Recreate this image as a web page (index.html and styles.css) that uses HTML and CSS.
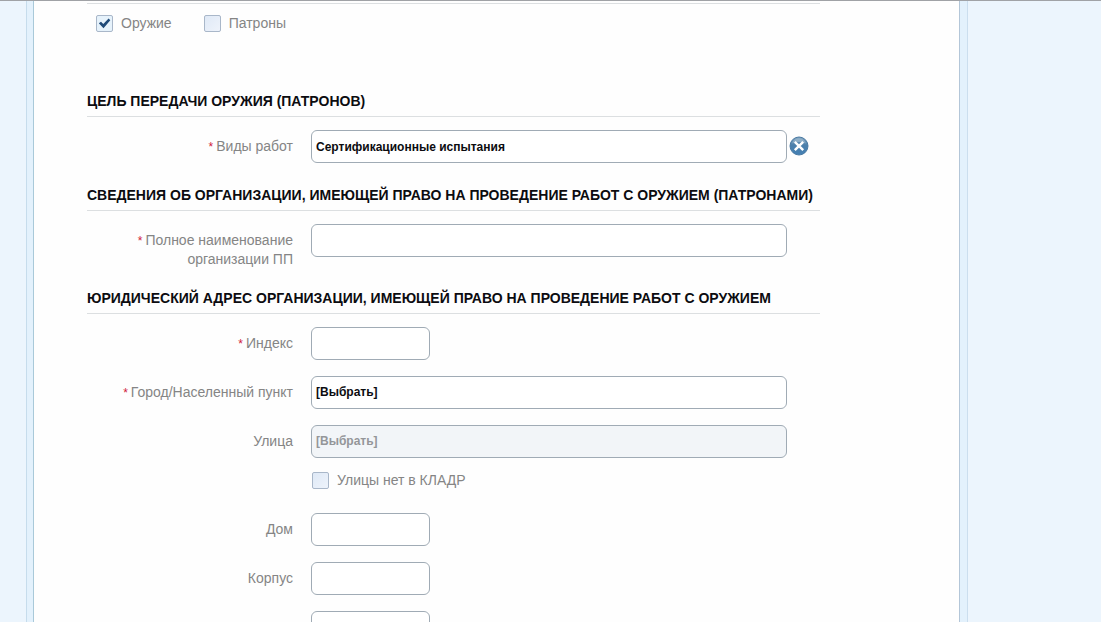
FILE: index.html
```
<!DOCTYPE html>
<html lang="ru">
<head>
<meta charset="utf-8">
<title>Передача оружия (патронов)</title>
<link rel="stylesheet" href="styles.css">
</head>
<body>
<div class="page">
  <div class="side side-left"></div>
  <div class="edge edge-left"></div>
  <main class="sheet">
    <form class="form">
      <div class="choices">
        <label class="check"><input type="checkbox" class="box" checked><span>Оружие</span></label>
        <label class="check"><input type="checkbox" class="box"><span>Патроны</span></label>
      </div>

      <section class="section section-first">
        <h2 class="title">ЦЕЛЬ ПЕРЕДАЧИ ОРУЖИЯ (ПАТРОНОВ)</h2>
        <div class="row">
          <label class="label" for="works"><span class="req">*</span>Виды работ</label>
          <input class="field" id="works" type="text" value="Сертификационные испытания">
          <button class="clear" type="button" aria-label="Очистить">
            <svg viewBox="0 0 20 20" width="20" height="20">
              <defs>
                <linearGradient id="ball" x1="0" y1="0" x2="0" y2="1">
                  <stop offset="0" stop-color="#7fa3bf"/>
                  <stop offset="0.45" stop-color="#4d80ab"/>
                  <stop offset="1" stop-color="#4380b4"/>
                </linearGradient>
              </defs>
              <circle cx="10" cy="10" r="9" fill="url(#ball)" stroke="#4a7aa3" stroke-width="1"/>
              <path d="M3 7.5C4.500 3.700 7 2.300 10 2.300S15.500 3.700 17 7.500C13 5.600 7 5.600 3 7.500Z" fill="#a9c1d3" opacity="0.6"/>
              <path d="M5.800 5.800L14.200 14.200M14.200 5.800L5.800 14.200" stroke="#fff" stroke-width="2.400"/>
            </svg>
          </button>
        </div>
      </section>

      <section class="section">
        <h2 class="title">СВЕДЕНИЯ ОБ ОРГАНИЗАЦИИ, ИМЕЮЩЕЙ ПРАВО НА ПРОВЕДЕНИЕ РАБОТ С ОРУЖИЕМ (ПАТРОНАМИ)</h2>
        <div class="row">
          <label class="label" for="org"><span class="req">*</span>Полное наименование<br>организации ПП</label>
          <input class="field" id="org" type="text">
        </div>
      </section>

      <section class="section">
        <h2 class="title">ЮРИДИЧЕСКИЙ АДРЕС ОРГАНИЗАЦИИ, ИМЕЮЩЕЙ ПРАВО НА ПРОВЕДЕНИЕ РАБОТ С ОРУЖИЕМ</h2>
        <div class="row">
          <label class="label" for="zip"><span class="req">*</span>Индекс</label>
          <input class="field field-short" id="zip" type="text">
        </div>
        <div class="row">
          <label class="label" for="city"><span class="req">*</span>Город/Населенный пункт</label>
          <select class="field" id="city"><option>[Выбрать]</option></select>
        </div>
        <div class="row">
          <label class="label" for="street">Улица</label>
          <select class="field" id="street" disabled><option>[Выбрать]</option></select>
        </div>
        <div class="row row-check">
          <label class="check"><input type="checkbox" class="box"><span>Улицы нет в КЛАДР</span></label>
        </div>
        <div class="row">
          <label class="label" for="house">Дом</label>
          <input class="field field-short" id="house" type="text">
        </div>
        <div class="row">
          <label class="label" for="block">Корпус</label>
          <input class="field field-short" id="block" type="text">
        </div>
        <div class="row">
          <span class="label"></span>
          <input class="field field-short" type="text" aria-label="Строение">
        </div>
      </section>
    </form>
  </main>
  <div class="edge edge-right"></div>
  <div class="side side-right"></div>
</div>
</body>
</html>
```
FILE: styles.css
```
* {
  box-sizing: border-box;
}

body {
  margin: 0;
  font: 14px/19px "Liberation Sans", Arial, sans-serif;
  color: #858585;
  background: #fefefe;
}

.page {
  display: flex;
  height: 100vh;
  overflow: hidden;
  border-top: 1px solid #a0a2a6;
}

.side {
  background: #ecf5fd;
}

.side-left {
  flex: 0 0 26px;
}

.side-right {
  flex: 0 0 133px;
}

.edge {
  flex: 0 0 8px;
  background: #e3f1fc;
}

.edge-left {
  border-left: 1px solid #c6dcec;
  border-right: 1px solid #a9c9d9;
}

.edge-right {
  flex-basis: 9px;
  border-left: 1px solid #b3c6d8;
  border-right: 1px solid #cbdeee;
}

.sheet {
  flex: 1;
  min-width: 0;
  padding: 2px 53px 0;
}

.form {
  max-width: 733px;
}

.choices {
  display: flex;
  gap: 32px;
  padding: 10px 9px 0;
  border-top: 1px solid #dcdfe1;
}

.check {
  display: flex;
  align-items: center;
  gap: 8px;
}

.box {
  appearance: none;
  width: 17px;
  height: 17px;
  margin: 0;
  border: 1px solid #a9b7c9;
  border-radius: 2px;
  background: linear-gradient(135deg, #dfe9f6, #eef3fb);
}

.box:checked {
  background: url("data:image/svg+xml,%3Csvg xmlns='http://www.w3.org/2000/svg' viewBox='0 0 15 15'%3E%3Cpath d='M1.800 7.300L4 5.700L6.300 8L11.600 2.600L13.300 4.200L6.500 12.300Z' fill='%231f4a78'/%3E%3C/svg%3E") #e6f2fb;
}

.section {
  margin-top: 19px;
}

.section-first {
  margin-top: 58px;
}

.title {
  margin: 0 0 13px;
  padding-bottom: 5px;
  border-bottom: 1px solid #dcdfe1;
  font-size: 14px;
  line-height: 20px;
  color: #0c0c10;
  white-space: nowrap;
}

.row {
  display: flex;
  align-items: flex-start;
  min-height: 36px;
}

.row + .row {
  margin-top: 13px;
}

.row + .row-check {
  min-height: 29px;
  margin-top: 10px;
  padding-left: 225px;
}

.label {
  flex: 0 0 206px;
  margin-right: 18px;
  padding-top: 7px;
  text-align: right;
}

.req {
  margin-right: 3px;
  font-size: 12px;
  line-height: 1;
  color: #d0203a;
}

.field {
  appearance: none;
  flex: 0 1 476px;
  min-width: 0;
  height: 33px;
  margin: 0;
  padding: 0 4px;
  border: 1px solid #a0abb5;
  border-radius: 6px;
  background: #fff;
  color: #0c0c10;
  font: bold 12px/19px "Liberation Sans", Arial, sans-serif;
}

.field:disabled {
  background: #f2f5f8;
  color: #949699;
  opacity: 1;
}

.field-short {
  flex-basis: 119px;
}

.clear {
  display: flex;
  margin: 6px 0 0 2px;
  padding: 0;
  border: 0;
  background: none;
}
```
